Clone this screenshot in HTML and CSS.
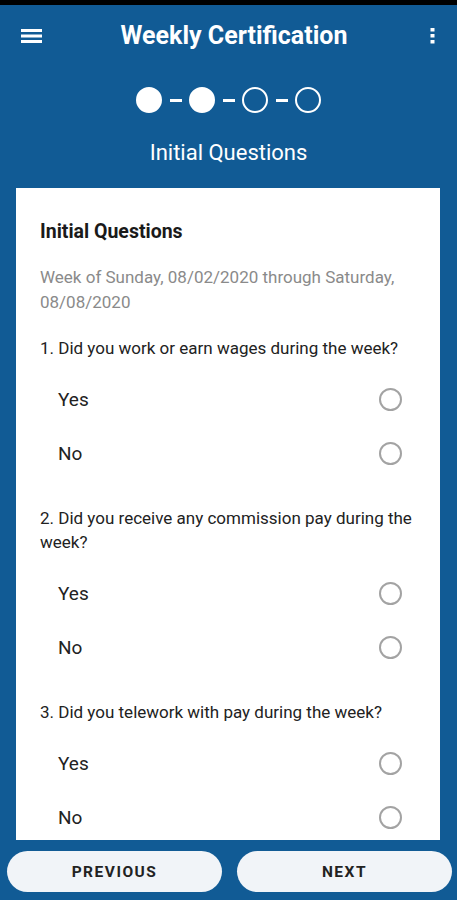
FILE: index.html
```html
<!DOCTYPE html>
<html lang="en">
<head>
    <meta charset="UTF-8">
    <meta name="viewport" content="width=device-width, initial-scale=1.0">
    <title>Weekly Certification</title>
    <link rel="stylesheet" href="styles.css">
</head>
<body>

<div class="screen">
    <div class="status"></div>

    <!-- App bar -->
    <div class="appbar">
        <div class="menu">
            <svg width="21" height="15" viewBox="0 0 21 15">
                <rect x="0" y="0" width="21" height="3" fill="#fff"/>
                <rect x="0" y="5.5" width="21" height="3" fill="#fff"/>
                <rect x="0" y="11" width="21" height="3" fill="#fff"/>
            </svg>
        </div>
        <h1 class="title">Weekly Certification</h1>
        <div class="more">
            <svg width="5" height="16" viewBox="0 0 5 16">
                <rect x="0.5" y="0" width="4" height="3.5" fill="#fff"/>
                <rect x="0.5" y="6" width="4" height="3.5" fill="#fff"/>
                <rect x="0.5" y="12" width="4" height="3.5" fill="#fff"/>
            </svg>
        </div>
    </div>

    <!-- Step indicator -->
    <div class="stepper">
        <span class="step done"></span>
        <span class="dash"></span>
        <span class="step done"></span>
        <span class="dash"></span>
        <span class="step"></span>
        <span class="dash"></span>
        <span class="step"></span>
    </div>
    <div class="subtitle">Initial Questions</div>

    <!-- Questions card -->
    <div class="card">
        <h2 class="card-title">Initial Questions</h2>
        <p class="week">Week of Sunday, 08/02/2020 through Saturday, 08/08/2020</p>

        <div class="question">
            <p class="q-text">1. Did you work or earn wages during the week?</p>
            <div class="options">
                <label class="option"><span>Yes</span><span class="radio"></span></label>
                <label class="option"><span>No</span><span class="radio"></span></label>
            </div>
        </div>

        <div class="question">
            <p class="q-text">2. Did you receive any commission pay during the week?</p>
            <div class="options">
                <label class="option"><span>Yes</span><span class="radio"></span></label>
                <label class="option"><span>No</span><span class="radio"></span></label>
            </div>
        </div>

        <div class="question">
            <p class="q-text">3. Did you telework with pay during the week?</p>
            <div class="options">
                <label class="option"><span>Yes</span><span class="radio"></span></label>
                <label class="option"><span>No</span><span class="radio"></span></label>
            </div>
        </div>
    </div>

    <!-- Navigation -->
    <div class="footer">
        <button class="nav-btn">Previous</button>
        <button class="nav-btn">Next</button>
    </div>
</div>

</body>
</html>
```

FILE: styles.css
```css
body {
    margin: 0;
    font-family: Roboto, "Liberation Sans", Arial, sans-serif;
    background-color: #115b95;
}
.screen {
    height: 900px;
    display: flex;
    flex-direction: column;
    overflow: hidden;
}
.status {
    height: 5px;
    background-color: #000;
}
.appbar {
    height: 62px;
    display: grid;
    grid-template-columns: 1fr auto 1fr;
    align-items: center;
    padding: 0 22px 0 21px;
}
.menu svg,
.more svg {
    display: block;
}
.more {
    justify-self: end;
}
.title {
    margin: 0 0 0 12px;
    color: #fff;
    font-size: 25px;
    font-weight: 700;
    line-height: 30px;
}
.stepper {
    margin-top: 20px;
    height: 26px;
    display: flex;
    justify-content: center;
    align-items: center;
}
.step {
    width: 26px;
    height: 26px;
    box-sizing: border-box;
    border: 2.5px solid #fff;
    border-radius: 50%;
}
.step.done {
    background-color: #fff;
}
.dash {
    width: 12px;
    height: 3px;
    margin: 0 7.5px;
    background-color: #fff;
}
.subtitle {
    margin-top: 28px;
    color: #fff;
    font-size: 22px;
    line-height: 24px;
    text-align: center;
}
.card {
    flex: 1;
    margin: 23px 17px 0 16px;
    padding: 32px 20px 0 24px;
    background-color: #fff;
    overflow: hidden;
}
.card-title {
    margin: 0;
    font-size: 19.5px;
    font-weight: 700;
    line-height: 24px;
    color: #1a1a1a;
}
.week {
    margin: 21px 0 0 0;
    font-size: 17px;
    line-height: 25px;
    color: #8a8a8a;
}
.question {
    margin-top: 21px;
}
.question + .question {
    margin-top: 26px;
}
.q-text {
    margin: 0;
    font-size: 17px;
    line-height: 24px;
    color: #222;
}
.options {
    margin-top: 12px;
}
.option {
    height: 54px;
    display: flex;
    align-items: center;
    justify-content: space-between;
    padding: 0 18px 0 18px;
    font-size: 19px;
    color: #222;
}
.radio {
    width: 23px;
    height: 23px;
    box-sizing: border-box;
    border: 2px solid #a3a3a3;
    border-radius: 50%;
}
.footer {
    display: flex;
    gap: 15px;
    padding: 11px 5px 8px 7px;
}
.nav-btn {
    flex: 1;
    height: 41px;
    border: none;
    border-radius: 21px;
    background-color: #f1f4f8;
    color: #222;
    font-family: Roboto, "Liberation Sans", Arial, sans-serif;
    font-size: 15.5px;
    font-weight: 700;
    letter-spacing: 1.5px;
    text-transform: uppercase;
    cursor: pointer;
}
```
